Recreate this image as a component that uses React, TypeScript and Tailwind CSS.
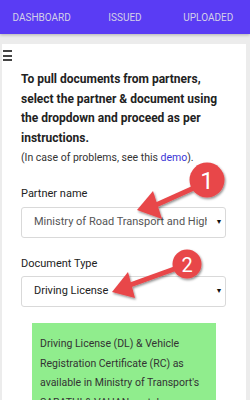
import React from 'react';

const TABS = ['Dashboard', 'Issued', 'Uploaded'];

function Annotations() {
  return (
    <svg className="pointer-events-none absolute left-0 top-0" width={250} height={400} viewBox="0 0 250 400">
      <defs>
        <filter id="shadow" x="-20%" y="-20%" width="140%" height="140%">
          <feDropShadow dx="1" dy="1.5" stdDeviation="1" floodColor="#000" floodOpacity="0.45" />
        </filter>
      </defs>
      <g filter="url(#shadow)" fill="#e8464a">
        {/* callout 1 */}
        <line x1="156" y1="205" x2="196" y2="187" stroke="#e8464a" strokeWidth="5" />
        <polygon points="137,210 153,191 162,219" />
        <circle cx="207" cy="180" r="17.5" />
        {/* callout 2 */}
        <line x1="130" y1="285" x2="177" y2="268" stroke="#e8464a" strokeWidth="5" />
        <polygon points="112,292 128,272 135,298" />
        <circle cx="187" cy="264" r="14.5" />
      </g>
      <text x="207" y="188.5" textAnchor="middle" fill="#fff" fontSize="24" fontFamily="Roboto, sans-serif">
        1
      </text>
      <text x="187" y="271.5" textAnchor="middle" fill="#fff" fontSize="20" fontFamily="Roboto, sans-serif">
        2
      </text>
    </svg>
  );
}

function FakeSelect({ value, muted }: { value: string; muted?: boolean }) {
  return (
    <div className="flex h-[31px] w-[205px] items-center rounded-[3px] border border-[#d9d9d9] bg-white pl-[12px] pr-[2px]">
      <span
        className={`mr-[8px] flex-1 overflow-hidden whitespace-nowrap text-[11px] ${muted ? 'text-[#555]' : 'text-[#222]'}`}
      >
        {value}
      </span>
      <span className="w-[8px] text-center text-[7px] text-[#111]">▼</span>
    </div>
  );
}

export default function App() {
  return (
    <div className="relative h-[400px] w-[250px] overflow-hidden bg-[#ececec] font-['Roboto',sans-serif]">
      <header className="flex h-[34px] items-center bg-[#5a3cf4] shadow-[0_1px_3px_rgba(0,0,0,0.25)]">
        {TABS.map((t) => (
          <div key={t} className="flex-1 text-center text-[10px] uppercase text-[#d3d0e8]">
            {t}
          </div>
        ))}
      </header>

      <main className="ml-[2px] mr-[4px] mt-[10px] h-[356px] bg-white">
        <div className="flex flex-col gap-[2.5px] pl-[1px] pt-[6px]">
          <span className="block h-[2px] w-[9px] bg-[#444]" />
          <span className="block h-[2px] w-[9px] bg-[#444]" />
          <span className="block h-[2px] w-[9px] bg-[#444]" />
        </div>

        <div className="pl-[19px]">
          <p className="mt-[9px] w-[200px] text-[12px] font-bold leading-[19.5px] text-[#222]">
            To pull documents from partners, select the partner &amp; document using the dropdown and proceed as per
            instructions.
          </p>
          <p className="text-[10.5px] leading-[20px] text-[#333]">
            (In case of problems, see this <span className="text-[#3b35d6]">demo</span>).
          </p>

          <label className="mt-[18px] block text-[11px] leading-[16px] text-[#222]">Partner name</label>
          <div className="mt-[5px]">
            <FakeSelect value="Ministry of Road Transport and Highways" muted />
          </div>

          <label className="mt-[18px] block text-[11px] leading-[16px] text-[#222]">Document Type</label>
          <div className="mt-[4px]">
            <FakeSelect value="Driving License" />
          </div>

          <div className="ml-[11px] mt-[16px] w-[184px] bg-[#90ed8d] pb-[10px] pl-[8px] pr-[10px] pt-[11px] text-[10.5px] leading-[19.5px] text-[#333]">
            Driving License (DL) &amp; Vehicle Registration Certificate (RC) as available in Ministry of Transport's
            SARATHI &amp; VAHAN portals.
          </div>
        </div>
      </main>

      <Annotations />
    </div>
  );
}
